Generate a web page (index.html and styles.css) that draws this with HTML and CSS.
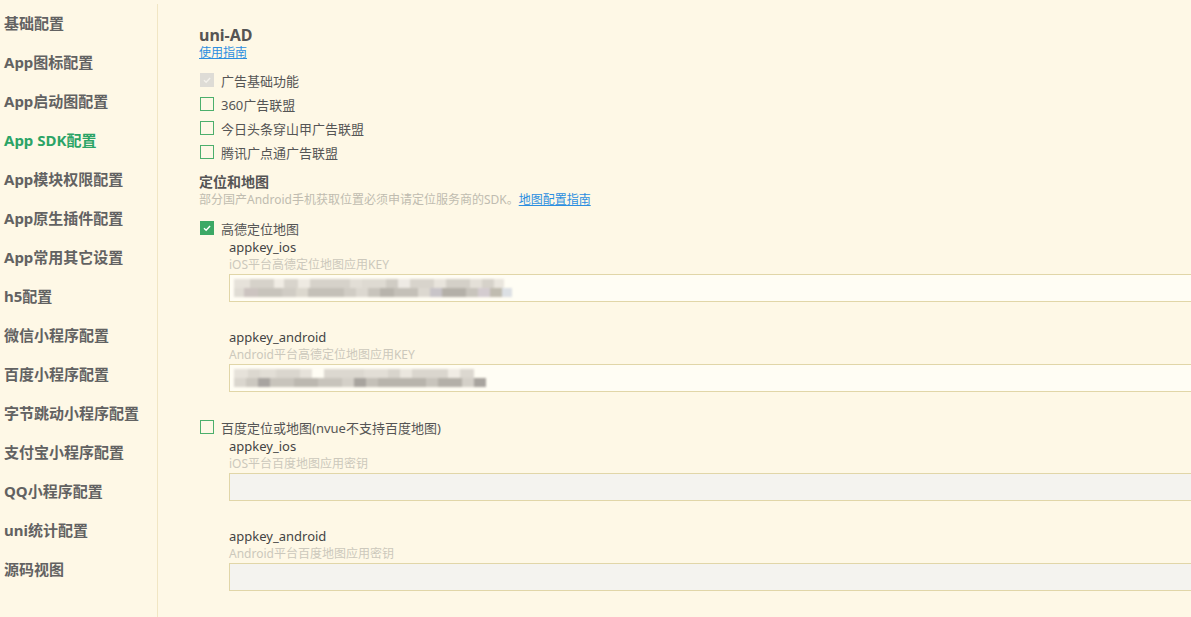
FILE: index.html
```html
<!DOCTYPE html>
<html lang="zh-CN">
<head>
<meta charset="utf-8">
<title>manifest</title>
<link rel="stylesheet" href="styles.css">
</head>
<body>
<div class="page">
  <nav class="sidebar">
    <div class="nav-item">基础配置</div>
    <div class="nav-item">App图标配置</div>
    <div class="nav-item">App启动图配置</div>
    <div class="nav-item active">App SDK配置</div>
    <div class="nav-item">App模块权限配置</div>
    <div class="nav-item">App原生插件配置</div>
    <div class="nav-item">App常用其它设置</div>
    <div class="nav-item">h5配置</div>
    <div class="nav-item">微信小程序配置</div>
    <div class="nav-item">百度小程序配置</div>
    <div class="nav-item">字节跳动小程序配置</div>
    <div class="nav-item">支付宝小程序配置</div>
    <div class="nav-item">QQ小程序配置</div>
    <div class="nav-item">uni统计配置</div>
    <div class="nav-item">源码视图</div>
  </nav>
  <main class="content">
    <h2 class="sec-title">uni-AD</h2>
    <a class="link" href="#">使用指南</a>
    <div class="check-list">
      <label class="check"><span class="box disabled"><svg viewBox="0 0 14 14"><path d="M3.5 7.2 L6 9.6 L10.6 4.6" /></svg></span>广告基础功能</label>
      <label class="check"><span class="box"></span>360广告联盟</label>
      <label class="check"><span class="box"></span>今日头条穿山甲广告联盟</label>
      <label class="check"><span class="box"></span>腾讯广点通广告联盟</label>
    </div>

    <h3 class="sec-title sub">定位和地图</h3>
    <div class="desc">部分国产Android手机获取位置必须申请定位服务商的SDK。<a class="link inline" href="#">地图配置指南</a></div>

    <label class="check first"><span class="box checked"><svg viewBox="0 0 14 14"><path d="M3.5 7.2 L6 9.6 L10.6 4.6" /></svg></span>高德定位地图</label>
    <div class="field">
      <div class="f-label">appkey_ios</div>
      <div class="f-hint">iOS平台高德定位地图应用KEY</div>
      <div class="input">
        <div class="blur">
          <div class="blur-row"><i style="width:16px;background:#e6e2da"></i><i style="width:24px;background:#d6d2ca"></i><i style="width:10px;background:#f0ece4"></i><i style="width:14px;background:#d8d4cc"></i><i style="width:12px;background:#eeeae2"></i><i style="width:40px;background:#d6d2ca"></i><i style="width:12px;background:#e2ded6"></i><i style="width:24px;background:#dedad2"></i><i style="width:12px;background:#d0ccc4"></i><i style="width:12px;background:#eeeae4"></i><i style="width:24px;background:#d8d4cc"></i><i style="width:12px;background:#e8e4dc"></i><i style="width:24px;background:#d4d0c8"></i><i style="width:12px;background:#e4e0d8"></i><i style="width:12px;background:#d6d2ca"></i><i style="width:10px;background:#eae6de"></i></div>
          <div class="blur-row"><i style="width:10px;background:#e0dcd4"></i><i style="width:14px;background:#ccc4c0"></i><i style="width:24px;background:#c8c4bc"></i><i style="width:14px;background:#d0ccc4"></i><i style="width:12px;background:#dcd8ce"></i><i style="width:36px;background:#c4c0b8"></i><i style="width:12px;background:#d0ccc4"></i><i style="width:12px;background:#dcd8d0"></i><i style="width:12px;background:#c8c4bc"></i><i style="width:14px;background:#b8b4ac"></i><i style="width:24px;background:#c4c0b8"></i><i style="width:12px;background:#dcd8d0"></i><i style="width:12px;background:#c8c4c8"></i><i style="width:24px;background:#b4b0a8"></i><i style="width:12px;background:#c8c4bc"></i><i style="width:12px;background:#d4ccd0"></i><i style="width:12px;background:#c0bcb0"></i><i style="width:10px;background:#dce0e4"></i></div>
        </div>
      </div>
    </div>
    <div class="field">
      <div class="f-label">appkey_android</div>
      <div class="f-hint">Android平台高德定位地图应用KEY</div>
      <div class="input">
        <div class="blur">
          <div class="blur-row"><i style="width:14px;background:#e6e2da"></i><i style="width:12px;background:#dcd8d0"></i><i style="width:16px;background:#e2ded6"></i><i style="width:24px;background:#dad6ce"></i><i style="width:12px;background:#e6e2da"></i><i style="width:12px;background:#fffdf4"></i><i style="width:40px;background:#dcd8d0"></i><i style="width:24px;background:#e2ded6"></i><i style="width:12px;background:#d8d4cc"></i><i style="width:12px;background:#eae6de"></i><i style="width:36px;background:#dad6ce"></i><i style="width:12px;background:#f0ece4"></i><i style="width:14px;background:#dcd8d0"></i></div>
          <div class="blur-row"><i style="width:12px;background:#dad6ce"></i><i style="width:12px;background:#ccc8c0"></i><i style="width:12px;background:#a8a4a0"></i><i style="width:24px;background:#c8c4bc"></i><i style="width:24px;background:#bcb8b0"></i><i style="width:24px;background:#c8c4bc"></i><i style="width:12px;background:#d4d0c8"></i><i style="width:12px;background:#a8a49e"></i><i style="width:12px;background:#c4c0b8"></i><i style="width:48px;background:#b8b4ac"></i><i style="width:12px;background:#c8c4bc"></i><i style="width:24px;background:#b4b0a8"></i><i style="width:12px;background:#d4d0c8"></i><i style="width:12px;background:#a8a49e"></i></div>
        </div>
      </div>
    </div>

    <label class="check second"><span class="box"></span>百度定位或地图(nvue不支持百度地图)</label>
    <div class="field">
      <div class="f-label">appkey_ios</div>
      <div class="f-hint">iOS平台百度地图应用密钥</div>
      <div class="input disabled"></div>
    </div>
    <div class="field">
      <div class="f-label">appkey_android</div>
      <div class="f-hint">Android平台百度地图应用密钥</div>
      <div class="input disabled"></div>
    </div>
  </main>
</div>
</body>
</html>
```
FILE: styles.css
```css
html, body {
  margin: 0;
  padding: 0;
  background: #fef8e6;
  overflow: hidden;
}
body {
  font-family: "Noto Sans", "Noto Sans CJK SC", sans-serif;
  color: #555;
  width: 1191px;
  height: 617px;
}
.page {
  display: flex;
  height: 617px;
}
.sidebar {
  width: 158px;
  flex: none;
  box-sizing: border-box;
  padding-top: 4px;
  padding-left: 4px;
  position: relative;
}
.sidebar::after {
  content: "";
  position: absolute;
  right: 0;
  top: 4px;
  bottom: 0;
  width: 1px;
  background: #f1e6c4;
}
.nav-item {
  height: 39px;
  line-height: 39px;
  font-size: 15px;
  font-weight: 700;
  color: #626262;
  white-space: nowrap;
}
.nav-item.active {
  color: #2ba466;
}
.content {
  flex: 1;
  padding: 25px 0 0 41px;
  min-width: 0;
}
.sec-title {
  margin: 0;
  font-size: 16px;
  line-height: 20px;
  font-weight: 700;
  color: #555;
}
.sec-title.sub {
  font-size: 14px;
  margin-top: 8px;
}
.link {
  display: block;
  font-size: 12px;
  line-height: 16px;
  color: #2b8ee0;
  text-decoration: underline;
  width: max-content;
}
.link.inline {
  display: inline;
}
.check-list {
  margin-top: 7px;
}
.check {
  display: flex;
  align-items: center;
  height: 24px;
  font-size: 13px;
  color: #555;
  gap: 7px;
  padding-left: 1px;
}
.check.first {
  margin-top: 8px;
}
.check.second {
  margin-top: 23px;
}
.box {
  width: 14px;
  height: 14px;
  box-sizing: border-box;
  border: 1px solid #4caf6c;
  flex: none;
  display: flex;
  align-items: center;
  justify-content: center;
}
.box svg {
  width: 14px;
  height: 14px;
  fill: none;
  stroke: #fff;
  stroke-width: 1.6;
}
.box.checked {
  background: #3ca865;
  border-color: #3ca865;
}
.box.disabled {
  background: #dedcd6;
  border-color: #dedcd6;
}
.box.disabled svg {
  stroke: #f4f2ec;
}
.desc {
  font-size: 12px;
  line-height: 16px;
  color: #c0bcb0;
}
.field {
  padding-left: 30px;
}
.field + .field {
  margin-top: 28px;
}
.f-label {
  margin-top: -1px;
  font-size: 13px;
  line-height: 16px;
  color: #444;
}
.f-hint {
  margin-top: 2px;
  font-size: 12px;
  line-height: 16px;
  color: #ccc8bc;
}
.input {
  margin-top: 1px;
  height: 28px;
  width: calc(100% + 20px);
  box-sizing: border-box;
  border: 1px solid #e1d6a8;
  background: #fffdf4;
  display: flex;
  align-items: center;
  overflow: hidden;
}
.input.disabled {
  background: #f4f3ef;
}
.blur {
  filter: blur(0.8px);
  padding-left: 4px;
  display: flex;
  flex-direction: column;
  gap: 0;
}
.blur-row {
  display: flex;
  height: 9px;
}
.blur-row i {
  display: block;
  height: 9px;
}
```
